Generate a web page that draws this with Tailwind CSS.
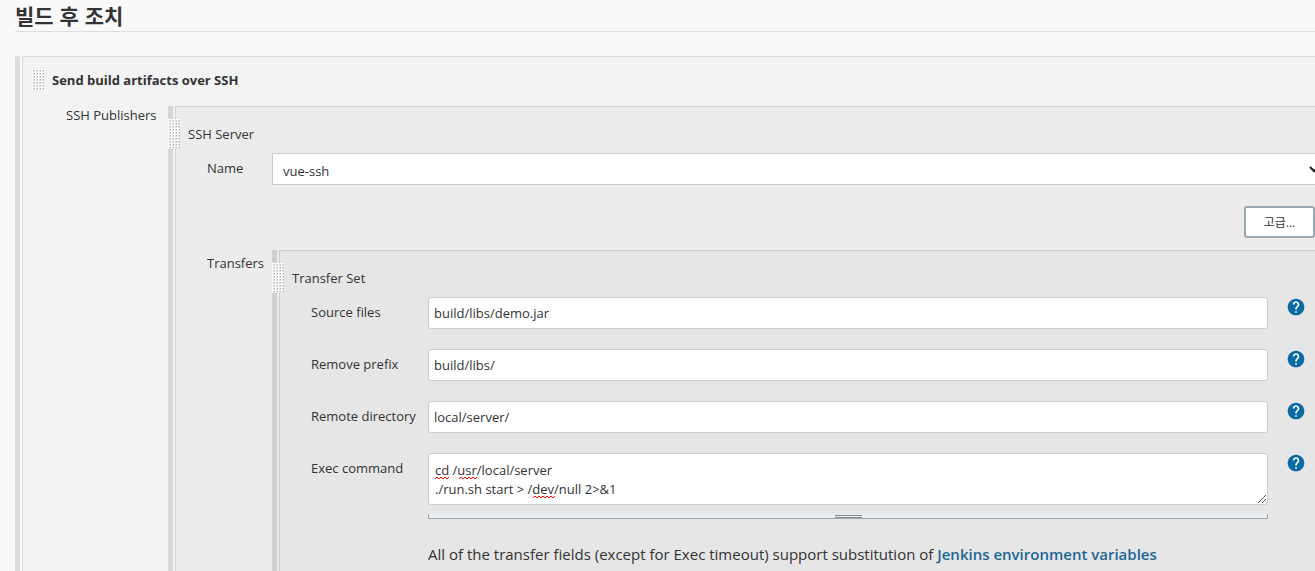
<!DOCTYPE html>
<html lang="ko">
<head>
<meta charset="utf-8">
<title>빌드 후 조치</title>
<script src="https://cdn.jsdelivr.net/npm/@tailwindcss/browser@4"></script>
</head>
<body class="h-screen overflow-hidden bg-[#f9f9f9] text-[#333] font-['Open_Sans','Noto_Sans_CJK_KR',sans-serif] text-[13px] leading-5">
<svg class="absolute size-0" aria-hidden="true">
  <symbol id="help" viewBox="0 0 24 24"><path fill="#0b6aa2" d="M12 2C6.48 2 2 6.48 2 12s4.480 10 10 10 10-4.480 10-10S17.520 2 12 2z"/><path fill="#fff" d="M13 19h-2v-2h2v2zm2.070-7.750l-.9.920C13.450 12.900 13 13.500 13 15h-2v-.5c0-1.100.450-2.100 1.170-2.830l1.240-1.260c.370-.360.590-.860.590-1.410 0-1.100-.9-2-2-2s-2 .9-2 2H8c0-2.210 1.790-4 4-4s4 1.790 4 4c0 .880-.360 1.680-.930 2.250z"/></symbol>
  <pattern id="dots" width="3" height="3" patternUnits="userSpaceOnUse"><rect width="3" height="3" fill="#fff"/><path fill="#dedede" d="M1 1h2v2H1z"/><path fill="#b4b4b4" d="M2 1h1v1H2z"/></pattern>
</svg>
<main class="flex h-full flex-col overflow-hidden pl-[15px]">
  <h1 class="h-8 shrink-0 border-b border-[#dedede] text-[21px] leading-[30px] font-bold font-['Noto_Sans_CJK_KR',sans-serif]">빌드 후 조치</h1>
  <section class="mt-6 flex min-h-0 flex-1 border-l-[5px] border-[#ddd] pl-[2px]">
    <div class="flex min-w-0 flex-1 flex-col border-l border-t border-[#d8d8d8] bg-[#f3f3f3] pt-3">
      <div class="flex items-center gap-2 pl-[9px]">
        <svg class="h-[21px] w-3" aria-hidden="true"><rect width="100%" height="100%" fill="url(#dots)"/></svg>
        <h2 class="font-bold">Send build artifacts over SSH</h2>
      </div>
      <div class="mt-4 flex flex-1">
        <div class="-mt-px w-[145px] shrink-0 pl-[43px]">SSH Publishers</div>
        <section class="relative flex min-w-0 flex-1 border-l-[5px] border-[#d6d6d6] pl-[2px]">
          <svg class="absolute -left-[5px] top-[13px] h-[30px] w-3" aria-hidden="true"><rect width="100%" height="100%" fill="url(#dots)"/></svg>
          <div class="flex min-w-0 flex-1 flex-col border-l border-t border-[#d2d2d2] bg-[#ececec] pt-[17px]">
            <h3 class="pl-3">SSH Server</h3>
            <div class="mt-[9px] flex">
              <label for="name" class="w-24 shrink-0 pl-[31px] pt-[5px]">Name</label>
              <div class="relative -mr-2 flex-1">
                <select id="name" class="h-8 w-full appearance-none border border-[#ccc] bg-white px-[10px] pt-1"><option>vue-ssh</option></select>
                <svg class="pointer-events-none absolute right-1 top-3 size-[10px]" viewBox="0 0 10 10" fill="none" stroke="#222" stroke-width="2" aria-hidden="true"><path d="M1 2l4 4 4-4"/></svg>
              </div>
            </div>
            <div class="mt-[21px] flex justify-end">
              <button type="button" class="h-8 w-[71px] rounded-[3px] border-2 border-[#9aa8b2] bg-white pt-px text-xs">고급...</button>
            </div>
            <div class="mt-3 flex flex-1">
              <div class="w-24 shrink-0 pl-[31px] pt-[3px]">Transfers</div>
              <section class="relative flex min-w-0 flex-1 border-l-[5px] border-[#d0d0d0] pl-[2px]">
                <svg class="absolute -left-[5px] top-[13px] h-[30px] w-3" aria-hidden="true"><rect width="100%" height="100%" fill="url(#dots)"/></svg>
                <div class="min-w-0 flex-1 border-l border-t border-[#ccc] bg-[#e6e6e6] pt-[17px]">
                  <h4 class="pl-3">Transfer Set</h4>
                  <div class="mt-[9px] flex flex-col gap-5 pl-[31px]">
                    <div class="flex"><label for="source" class="w-[117px] shrink-0 pt-[5px]">Source files</label><input id="source" value="build/libs/demo.jar" class="h-8 min-w-0 flex-1 rounded-[3px] border border-[#ccc] bg-white px-[5px]"><button type="button" aria-label="Help" class="ml-[18px] mr-[9px] size-5"><svg class="size-5"><use href="#help"/></svg></button></div>
                    <div class="flex"><label for="prefix" class="w-[117px] shrink-0 pt-[5px]">Remove prefix</label><input id="prefix" value="build/libs/" class="h-8 min-w-0 flex-1 rounded-[3px] border border-[#ccc] bg-white px-[5px]"><button type="button" aria-label="Help" class="ml-[18px] mr-[9px] size-5"><svg class="size-5"><use href="#help"/></svg></button></div>
                    <div class="flex"><label for="remote" class="w-[117px] shrink-0 pt-[5px]">Remote directory</label><input id="remote" value="local/server/" class="h-8 min-w-0 flex-1 rounded-[3px] border border-[#ccc] bg-white px-[5px]"><button type="button" aria-label="Help" class="ml-[18px] mr-[9px] size-5"><svg class="size-5"><use href="#help"/></svg></button></div>
                    <div class="flex">
                      <label for="exec" class="w-[117px] shrink-0 pt-[5px]">Exec command</label>
                      <div class="min-w-0 flex-1">
                        <div class="relative">
                          <textarea id="exec" spellcheck="false" class="block h-[52px] w-full resize-none overflow-hidden rounded-[3px] border border-[#ccc] bg-white px-[6px] pt-[7px] leading-[19px]">cd /usr/local/server
./run.sh start &gt; /dev/null 2&gt;&amp;1</textarea>
                          <svg class="pointer-events-none absolute left-[7px] top-[23px] h-6 w-[130px]" fill="none" stroke="#f00" aria-hidden="true"><path d="M0 3l2-2 2 2 2-2 2 2 2-2 2 2 2-2M24 3l2-2 2 2 2-2 2 2 2-2 2 2 2-2 2 2 2-2M98 22l2-2 2 2 2-2 2 2 2-2 2 2 2-2 2 2 2-2 2 2 2-2"/></svg>
                          <svg class="pointer-events-none absolute bottom-[2px] right-[2px] size-[8px]" viewBox="0 0 8 8" stroke="#555" aria-hidden="true"><path d="M0 8l8-8M4 8l4-4"/></svg>
                        </div>
                        <div class="mt-[9px] flex h-[5px] justify-center border-x border-b border-[#9aa8b2] bg-[#e9eef1]"><div class="mt-px h-[3px] w-[27px] border-y border-[#848a87]"></div></div>
                      </div>
                      <button type="button" aria-label="Help" class="ml-[18px] mr-[9px] size-5"><svg class="size-5"><use href="#help"/></svg></button>
                    </div>
                  </div>
                  <p class="mt-[25px] pl-[148px] text-[15px]">All of the transfer fields (except for Exec timeout) support substitution of <a href="#" class="font-semibold text-[#1b6696]">Jenkins environment variables</a></p>
                </div>
              </section>
            </div>
          </div>
        </section>
      </div>
    </div>
  </section>
</main>
</body>
</html>
